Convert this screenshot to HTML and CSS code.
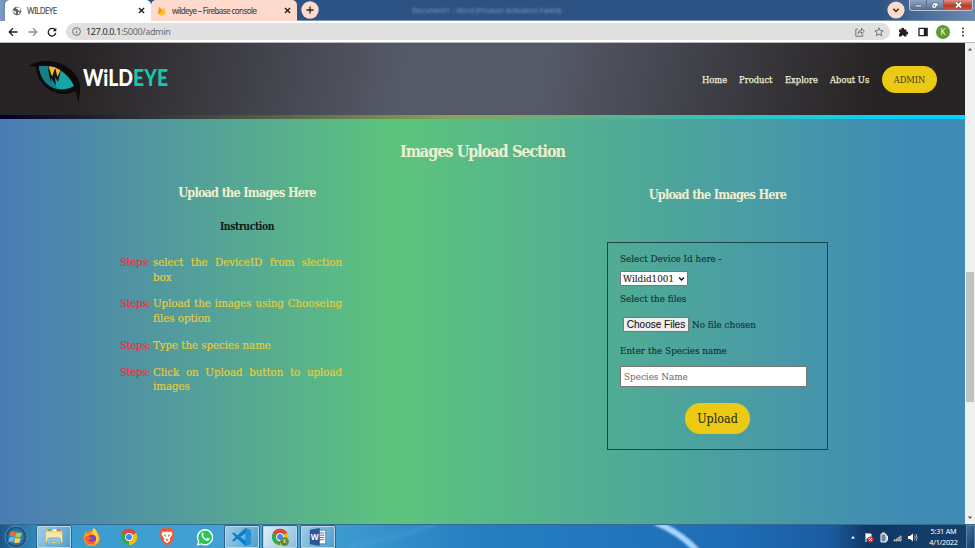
FILE: index.html
```html
<!DOCTYPE html>
<html lang="en">
<head>
<meta charset="utf-8">
<title>WILDEYE</title>
<link rel="stylesheet" href="styles.css">
</head>
<body>
<div class="browser">
  <header class="tabs">
    <div class="tab tab-active">
      <svg class="favicon" viewBox="0 0 10 10"><circle cx="5" cy="5" r="4.3" fill="#5f6368"/><path d="M1.2 4.4L3 5.2l1 .4v2.5L2.7 7 1.2 6zM4.8 1.2L4 2.8l1.7.5.9 1.4 1.9-.3V3L7.2 1.7zM6.2 6l1.7-.2-.8 1.7-1.5.7z" fill="#fff"/></svg>
      <span class="tab-title">WILDEYE</span>
      <svg class="close" viewBox="0 0 8 8"><path d="M1.7 1.7l4.6 4.6m0-4.6L1.7 6.3"/></svg>
    </div>
    <div class="tab tab-fire">
      <svg class="favicon" viewBox="0 0 10 10"><path d="M1 8L2.4.8l1.5 2.4L5 2l1 1.5L7.7 2l1.1 6L5 9.8z" fill="#ffc02e"/><path d="M1 8L2.4.8l1.5 2.4 1.4 2.4z" fill="#f58b20"/></svg>
      <span class="tab-title">wildeye – Firebase console</span>
      <svg class="close" viewBox="0 0 8 8"><path d="M1.7 1.7l4.6 4.6m0-4.6L1.7 6.3"/></svg>
    </div>
    <svg class="new-tab" viewBox="0 0 18 18"><circle cx="9" cy="9" r="8.7" fill="#fddacb"/><path d="M5.5 9h7M9 5.5v7" stroke="#262626" stroke-width="1.3"/></svg>
    <span class="ghost-title">Document1 - Word (Product Activation Failed)</span>
    <svg class="chevron" viewBox="0 0 18 18"><circle cx="9" cy="9" r="8.6" fill="#fddacb"/><path d="M6.4 7.8L9 10.4l2.6-2.6" fill="none" stroke="#262626" stroke-width="1.4"/></svg>
    <div class="window-buttons">
      <svg class="win" viewBox="0 0 18 11"><path d="M6 5h7v2H6z" fill="#fff" stroke="#3c4d66" stroke-width=".6"/></svg>
      <svg class="win" viewBox="0 0 18 11"><path d="M6.500 2.500h6v4h-2v2h-5v-4h1z" fill="#fff" stroke="#3c4d66" stroke-width=".7"/><path d="M7.500 5.300h1.500v1.200H7.500z" fill="#3c4d66"/></svg>
      <svg class="win win-close" viewBox="0 0 28 11"><path d="M12 2.500l5 5m0-5l-5 5" stroke="#4d3741" stroke-width="3"/><path d="M12 2.500l5 5m0-5l-5 5" stroke="#fff" stroke-width="1.800"/></svg>
    </div>
  </header>
  <div class="toolbar">
    <svg class="tool back" viewBox="0 0 10 10"><path d="M9.500 5H1.200M5 1.200L1.200 5 5 8.800"/></svg>
    <svg class="tool forward" viewBox="0 0 10 10"><path d="M.5 5h8.300M5 1.200L8.800 5 5 8.800"/></svg>
    <svg class="tool reload" viewBox="0 0 10 10"><path d="M8.300 3.200A3.800 3.800 0 1 0 8.800 6"/><path class="solid" d="M9.300.8v3.500H5.800z"/></svg>
    <div class="address">
      <svg class="info" viewBox="0 0 9 9"><circle cx="4.500" cy="4.500" r="3.900"/><path d="M4.500 4v2.600M4.500 2.200v1"/></svg>
      <span class="url">127.0.0.1<i>:5000/admin</i></span>
      <svg class="share" viewBox="0 0 10 10"><path d="M3 2.200H.8v7h7V7.500M3 6.500c.3-2.300 1.500-3.200 3.500-3.200V1.200l2.800 3-2.800 2.700V5C5 5 4 5.400 3 6.500z"/></svg>
      <svg class="star" viewBox="0 0 10 10"><path d="M5 .9l1.200 2.700 2.900.3-2.200 2 .7 2.900L5 7.200 2.400 8.800l.7-2.900-2.200-2 2.900-.3z"/></svg>
    </div>
    <svg class="puzzle" viewBox="0 0 10 10"><path d="M1 2.500h2.400a1.400 1.400 0 1 1 2.700 0h2.300v2.200a1.400 1.400 0 1 1 0 2.700v2.100H6.100a1.300 1.300 0 0 0-2.600 0H1V7a1.300 1.300 0 0 0 0-2.500z"/></svg>
    <svg class="panel" viewBox="0 0 10 10"><path d="M1 1.300h8v7.400H1z" fill="none" stroke="#202124" stroke-width="1.300"/><path d="M5.800 1H9.500v8H5.800z" fill="#202124"/></svg>
    <span class="avatar">K</span>
    <svg class="dots" viewBox="0 0 4 10"><circle cx="2" cy="1.500" r="1"/><circle cx="2" cy="5" r="1"/><circle cx="2" cy="8.500" r="1"/></svg>
  </div>
  <div class="viewport">
    <div class="page">
      <nav class="nav">
        <svg class="logo" viewBox="0 0 150 46">
          <path d="M0 8.500C8 3 18 2 27 4c10 2 18 8 22 15 4 7 4 15 1 26-.5-6-1-9-3-12-5 3-12 4-18 2-8-2-15-8-18-15-2-4-3-8-3-11-3-1-5-1-8-.5z" fill="#0b0b0b"/>
          <path d="M11 8h9c4 0 8 2 12 4 6 4 11 9 14 16-5 3-11 4-16 3-11-2-18-11-19-23z" fill="#17a5a3"/>
          <path d="M11 8h9c0 10 4 17 11 23-12-1-19-11-20-23z" fill="#147f86"/>
          <path d="M20 8l13 4-3 12-3-5 1 9-5-8 .5 5q-3-7-3.500-17z" fill="#101414"/>
          <path d="M20.500 8.500l7 .7-3.500 9.300zM27 9.500l5.500 2.700-3 6.800z" fill="#f9b62d"/>
          <text class="logo-word" x="55" y="28" textLength="85" lengthAdjust="spacingAndGlyphs">WiLD<tspan class="eye">EYE</tspan></text>
        </svg>
        <a class="home">Home</a><a class="product">Product</a><a class="explore">Explore</a><a class="about">About Us</a><a class="admin">ADMIN</a>
      </nav>
      <div class="stripe"></div>
      <main class="content">
        <h1>Images Upload Section</h1>
        <section class="instructions">
          <h2>Upload the Images Here</h2>
          <h3>Instruction</h3>
          <dl>
            <dt>Steps:</dt><dd>select the DeviceID from slection box</dd>
            <dt>Steps:</dt><dd>Upload the images using Chooseing files option</dd>
            <dt>Steps:</dt><dd>Type the species name</dd>
            <dt>Steps:</dt><dd>Click on Upload button to upload images</dd>
          </dl>
        </section>
        <section class="upload">
          <h2>Upload the Images Here</h2>
          <form>
            <label>Select Device Id here -</label>
            <div class="select"><span>Wildid1001</span><svg viewBox="0 0 7 6"><path d="M1 1.500l2.500 2.500L6 1.500"/></svg></div>
            <label>Select the files</label>
            <div class="file"><button type="button">Choose Files</button><span>No file chosen</span></div>
            <label>Enter the Species name</label>
            <div class="species">Species Name</div>
            <button class="submit" type="button">Upload</button>
          </form>
        </section>
      </main>
    </div>
    <div class="scrollbar"><svg viewBox="0 0 6 4"><path d="M1 3.500L3 1l2 2.500z"/></svg><div class="thumb"></div><svg viewBox="0 0 6 4"><path d="M1 .5h4L3 3z"/></svg></div>
  </div>
  <footer class="taskbar">
    <svg class="start" viewBox="0 0 32 24"><defs><radialGradient id="orb"><stop offset="0" stop-color="#5ab1dd"/><stop offset=".7" stop-color="#246ea5"/><stop offset="1" stop-color="#173e65"/></radialGradient></defs><circle cx="16" cy="12" r="11" fill="url(#orb)" stroke="#7aaac9" stroke-width=".7"/><path d="M10.500 7c2-1 3-.8 5 0l-1 4.500c-2-1-3-1-5 0z" fill="#ed6b32"/><path d="M16.500 7.400c2 .7 3.500.8 5.500-.2L21 11.500c-2 1-3.500.8-5.500.2z" fill="#a5cf45"/><path d="M9.200 12.700c2-1 3.200-.8 5 .1l-1 4.400c-2-.8-3-.8-5 0z" fill="#62bff0"/><path d="M15.200 13.100c2 .7 3.500.7 5.500-.2l-1 4.300c-2 1-3.500.9-5.500.2z" fill="#ffd04a"/></svg>
    <div class="task open"><svg viewBox="0 0 24 22"><path d="M3 3h7l1 1h10v14H3z" fill="#edd184" stroke="#c2a45a" stroke-width=".6"/><path d="M5 2.500h4v2H5z" fill="#5caf62"/><path d="M11 2.500h4v2h-4z" fill="#fff"/><path d="M15 2.500h4v2h-4z" fill="#e0694e"/><path d="M3 6h18v10H3z" fill="#f7e5a6"/><path d="M5 20v-6q0-2 2-2h10q2 0 2 2v6h-3v-4H8v4z" fill="#8cc8ea" stroke="#4690c2" stroke-width=".6"/></svg></div>
    <div class="task"><svg viewBox="0 0 24 22"><circle cx="12" cy="12" r="8.500" fill="#ff7139"/><path d="M13 1c3 2 4 4 4 6 2 1 4 4 3 8-1 4-5 6-8 6-5 0-9-4-9-9 0-3 1-5 3-7l1 3c3-2 6-2 6-7z" fill="#ff9c2d"/><path d="M14 1c3 2 4 5 4 7 3 5 1 9-4 11 4-4 3-8 0-10-2-2-2-5 0-8z" fill="#ffd43b"/><circle cx="12" cy="13" r="4.500" fill="#7b45b5"/><path d="M4 11c3-2 6 0 8 1-1 2-3 2-4 2 1 3 6 3 8 0 0 4-3 6-6 5-4 0-6-4-6-8z" fill="#ff5b2e"/></svg></div>
    <div class="task"><svg viewBox="0 0 24 22"><use href="#chrome"/></svg></div>
    <div class="task"><svg viewBox="0 0 24 22"><path d="M7 1.500h10l2 2 1 3-2 9-6 5.500-6-5.500-2-9 1-3z" fill="#fb542b"/><path d="M7 5l3 .6L12 5l2 .6 3-.6 1 3-3 5 .5 2L12 18l-3.500-3 .5-2-3-5z" fill="#fff"/><path d="M8 8l3 1-.5 2zM16 8l-3 1 .5 2zM10 14l2-1 2 1-2 1.500z" fill="#fb542b"/></svg></div>
    <div class="task"><svg viewBox="0 0 24 22"><path d="M3 20.500l1.300-4.600A9 9 0 1 1 8 19.300z" fill="#fff"/><path d="M5 18.800l.9-3A7.500 7.500 0 1 1 8.300 18z" fill="#25c65a"/><path d="M8.500 6.500c.8-.8 1.500-.3 2 1.500.3 1-.8 1.300-.5 1.800.8 1.500 2 2.500 3.500 3 .7.200 1-1.200 1.700-1 2.300.8 2.500 1.200 1.500 2.500-3 3-10-3-8.200-7.800z" fill="#fff"/></svg></div>
    <div class="task open"><svg viewBox="0 0 24 22"><path d="M16 1l5.500 2.500v15L16 21l-9-8-4 3-2-1 4-4-4-4 2-1 4 3zM16 7l-6 4 6 4z" fill="#087fca" fill-rule="evenodd"/><path d="M16 1l5.500 2.500v15L16 21z" fill="#2490dc"/></svg></div>
    <div class="task open current"><svg viewBox="0 0 24 22"><g id="chrome"><circle cx="12" cy="11" r="9" fill="#34a853"/><path d="M12 11L4.200 6.500a9 9 0 0 1 15.600 0H12z" fill="#ea4335"/><path d="M12 11l7.800-4.500A9 9 0 0 1 12 20z" fill="#fbbc05"/><circle cx="12" cy="11" r="4.300" fill="#fff"/><circle cx="12" cy="11" r="3.300" fill="#4285f4"/></g><circle cx="17" cy="16" r="4.800" fill="#5d8a35"/><text class="chrome-k" x="17" y="18" text-anchor="middle">K</text></svg></div>
    <div class="task open"><svg viewBox="0 0 24 22"><path d="M12 3.500h8.500v15H12z" fill="#fff" stroke="#2b579a" stroke-width=".7"/><path d="M14 6.500h5m-5 2.500h5m-5 2.500h5m-5 2.500h5" stroke="#2b579a" stroke-width=".9"/><path d="M3 3l11-2v20L3 19z" fill="#2b579a"/><text class="word-w" x="8.500" y="14" text-anchor="middle">W</text></svg></div>
    <svg class="streak" viewBox="0 0 90 25" preserveAspectRatio="none"><path d="M10-2Q38 10 54 29" fill="none" stroke="#a9d5ff" stroke-width="6"/></svg>
    <svg class="glow" viewBox="0 0 120 25" preserveAspectRatio="none"><path d="M0 22Q50 14 90-2" fill="none" stroke="#5fb2e6" stroke-width="3"/></svg>
    <div class="tray">
      <svg class="tray-icons" viewBox="0 0 70 14"><path d="M3 8.500L5 6l2 2.500z" fill="#fff"/><path d="M18 3v9m0-8h5v4h-5" stroke="#fff" fill="#fff"/><circle cx="22.500" cy="9.500" r="3" fill="#d9382e"/><path d="M21 8l3 3m0-3l-3 3" stroke="#fff"/><path d="M33 4h5v8h-5zm1-1h3m1 3h1.500v4l-2 2" fill="#6e8299" stroke="#fff"/><path d="M46 11h1v-1h-1zm2 0h1V9h-1zm2 0h1V7.500h-1zm2 0h1V6h-1z" stroke="#fff" stroke-width=".7"/><path d="M60 6h2l3-2.500v8L62 9h-2z" fill="#fff"/><path d="M66.500 5.500q1.500 2 0 4M68 4q2 3.500 0 7" fill="none" stroke="#dce9f5" stroke-width=".7"/></svg>
      <div class="clock"><span>5:31 AM</span><span>4/1/2022</span></div>
      <div class="show-desktop"></div>
    </div>
  </footer>
</div>
</body>
</html>
```
FILE: styles.css
```css
* { box-sizing: border-box; }
body { margin: 0; overflow: hidden; }
svg { display: block; flex: none; }
.browser { width: 975px; height: 548px; display: flex; flex-direction: column; font-family: "Noto Sans", sans-serif; }

/* Browser chrome */
.tabs { height: 21px; display: flex; background: linear-gradient(90deg, #7f9cc3, #2c5383 3% 90%, #6d8aaf); border-bottom: 1px solid #7794b7; }
.tab { height: 21px; display: flex; align-items: center; border-radius: 5px 5px 0 0; font-size: 8px; color: #45484c; }
.tab-active { margin-left: 5px; width: 146px; background: #fff; padding: 0 5px 0 7px; }
.tab-fire { width: 146px; background: #fddacb; padding: 0 5px 0 6px; }
.favicon { width: 10px; height: 10px; margin-right: 5px; }
.tab-title { flex: 1; white-space: nowrap; letter-spacing: -.56px; -webkit-text-stroke: .1px currentColor; }
.close { width: 9px; height: 9px; fill: none; stroke: #202124; stroke-width: 1.2; }
.new-tab { width: 18px; height: 18px; margin: 1px 0 0 4px; }
.ghost-title { margin: 5px 0 0 93px; width: 151px; font-size: 7px; line-height: 12px; white-space: nowrap; color: #98b3d4; filter: blur(1.3px); opacity: .75; }
.chevron { width: 18px; height: 18px; margin: 1px 0 0 auto; }
.window-buttons { display: flex; margin: 0 2px 0 4px; height: 11px; border: 1px solid #b6c6d7; border-top: 0; border-radius: 0 0 3px 3px; overflow: hidden; background: linear-gradient(#8fa7c2, #566e8f); }
.win { width: 17px; height: 11px; border-right: 1px solid #556f8f; }
.win-close { width: 28px; border: 0; background: linear-gradient(#dc9483, #bd3c2c 50%, #cc5e49); }
.toolbar { height: 22px; flex: none; display: flex; align-items: center; background: #fff; border-bottom: 1px solid #b5b9ba; }
.tool { width: 10px; height: 10px; fill: none; stroke: #202124; stroke-width: 1.3; }
.back { margin-left: 8px; }
.forward { margin-left: 10px; stroke: #8d9094; }
.reload { margin-left: 9px; }
.solid { fill: #202124; stroke: none; }
.address { margin-left: 9px; width: 824px; height: 17px; border-radius: 9px; background: #e0e0e0; display: flex; align-items: center; }
.info { width: 9px; height: 9px; margin-left: 6px; fill: none; stroke: #5f6368; stroke-width: .9; }
.url { margin-left: 5px; font-size: 9px; letter-spacing: -.35px; color: #292b2e; flex: 1; }
.url i { font-style: normal; color: #686b6e; }
.share, .star { width: 10px; height: 10px; fill: none; stroke: #64686c; stroke-width: .9; }
.star { margin: 0 6px 0 9px; }
.puzzle { width: 10px; height: 10px; margin-left: 8px; fill: #202124; }
.panel { width: 10px; height: 10px; margin-left: 10px; }
.avatar { width: 14px; height: 14px; border-radius: 50%; margin-left: 8px; background: #609b32; color: #fff; font-size: 8px; line-height: 14px; text-align: center; }
.dots { width: 4px; height: 10px; margin-left: 11px; fill: #303336; }

/* Page */
.viewport { height: 481px; flex: none; display: flex; }
.page { width: 965px; font-family: "Roboto Slab", "DejaVu Serif Condensed", "DejaVu Serif", serif; font-stretch: condensed; background: linear-gradient(90deg, #4a7bb5 0%, #5dc47d 41%, #408bb5 94%); }
.nav { height: 72px; display: flex; align-items: center; background: linear-gradient(100deg, #282425 8%, #565a68 42% 56%, #282425 90%); font-size: 9.3px; color: #eeeed2; -webkit-text-stroke: .25px currentColor; }
.logo { width: 150px; height: 46px; margin: 4px 0 0 28px; -webkit-text-stroke: 0; }
.logo-word { font: 900 22px Lato, sans-serif; fill: #fff; }
.eye { fill: #19c6ac; }
.home { margin-left: 524px; width: 37px; }
.product { width: 46px; }
.explore { width: 45px; }
.about { width: 52px; white-space: nowrap; }
.admin { width: 55px; height: 27px; line-height: 27px; border-radius: 14px; background: #ecca13; color: #3f3b13; text-align: center; -webkit-text-stroke: 0; letter-spacing: -.1px; }
.stripe { height: 4px; background: linear-gradient(90deg, #00002b, #86a557 47%, #00d4ff 94%); }
.content { height: 405px; display: grid; grid-template: 65px 340px / 120px 222px 265px 221px 1fr; }
h1, h2, h3, dl, dd { margin: 0; }
h1 { grid-area: 1 / 1 / 2 / 6; text-align: center; font-size: 16px; line-height: 22px; padding-top: 22px; color: #efefcf; letter-spacing: -1.06px; word-spacing: .5px; }
h2 { text-align: center; font-size: 12.6px; line-height: 18px; color: #efefcf; letter-spacing: -.84px; word-spacing: .4px; }
.instructions { grid-area: 2 / 2; }
.instructions h2 { padding-left: 32px; }
h3 { margin-top: 15px; padding-left: 32px; text-align: center; font-size: 10.3px; line-height: 18px; color: #101c13; letter-spacing: -.4px; }
dl { margin-top: 20px; display: grid; grid-template-columns: 33px 189px; row-gap: 12px; font-size: 11.4px; line-height: 14.7px; -webkit-text-stroke: .15px currentColor; }
dt { color: #f32932; letter-spacing: -.4px; }
dd { color: #e9ce36; text-align: justify; letter-spacing: -.03px; }
.upload { grid-area: 2 / 4; padding-top: 2px; }
form { margin-top: 38px; height: 208px; border: 1px solid #1c454b; padding: 8px 0 0 12px; display: flex; flex-direction: column; align-items: flex-start; font-size: 9.8px; color: #152e2d; -webkit-text-stroke: .12px currentColor; }
label { line-height: 16px; }
.select { margin: 4px 0 5px; width: 68px; height: 15px; background: #fff; border: 1px solid #777; border-radius: 1px; display: flex; align-items: center; justify-content: space-between; padding: 0 2px; color: #222; }
.select svg { width: 7px; height: 6px; fill: none; stroke: #111; stroke-width: 1.3; }
.file { margin: 9px 0 11px 3px; display: flex; align-items: center; gap: 3px; height: 16px; }
.file button { width: 66px; height: 15px; padding: 0; background: #efefef; border: 1px solid #777; border-radius: 1px; font: 10px "Liberation Sans", sans-serif; color: #171717; }
.species { margin-top: 7px; width: 187px; height: 21px; background: #fff; border: 1px solid #777; padding-left: 3px; line-height: 20px; color: #757575; }
.submit { margin: 16px 0 0 65px; width: 65px; height: 31px; border: 0; border-radius: 16px; padding: 0; background: #ecca13; color: #2b2e12; font-family: inherit; font-size: 12.4px; }
.scrollbar { width: 10px; background: #f1f1f1; display: flex; flex-direction: column; align-items: center; padding: 4px 0; }
.scrollbar svg { width: 6px; height: 4px; fill: #505050; }
.thumb { width: 8px; height: 130px; margin: 221px 0 auto; background: #c1c1c1; }

/* Desktop taskbar */
.taskbar { height: 24px; flex: none; display: flex; position: relative; background: linear-gradient(90deg, #1d5688, #399bce 5%, #45a4d4 30%, #2680c2 48%, #1e6db6 75%, #1b5ca1 85%, #103864 89%, #16406b); border-top: 1px solid #366b91; overflow: hidden; }
.start { width: 32px; height: 24px; margin-right: 2px; }
.task { width: 35.7px; height: 24px; margin-left: 2px; border: 1px solid transparent; display: flex; justify-content: center; align-items: center; }
.task svg { width: 22px; height: 20px; overflow: visible; }
.open { background: linear-gradient(120deg, #a3cde5, #4c9dcc); border-color: #2d668c; box-shadow: inset 0 0 0 1px #b5d8eb; border-radius: 2px; }
.current { background: linear-gradient(120deg, #e2f0f7, #86c0de); }
.chrome-k { font: 5px "Noto Sans", sans-serif; fill: #fff; }
.word-w { font: 700 9px "Noto Sans", sans-serif; fill: #fff; }
.streak { position: absolute; left: 645px; top: -1px; width: 90px; height: 25px; filter: blur(1px); }
.glow { position: absolute; left: 350px; top: -1px; width: 120px; height: 25px; filter: blur(2px); opacity: .35; }
.tray { margin-left: auto; display: flex; align-items: center; }
.tray-icons { width: 70px; height: 14px; margin-right: 8px; }
.clock { width: 35px; display: flex; flex-direction: column; align-items: center; color: #fff; font-size: 7.3px; line-height: 10.5px; white-space: nowrap; letter-spacing: -.25px; }
.show-desktop { width: 9px; height: 24px; margin-left: 5px; border: 1px solid #5981a6; background: linear-gradient(120deg, #44709b, #153c6a); }
```
